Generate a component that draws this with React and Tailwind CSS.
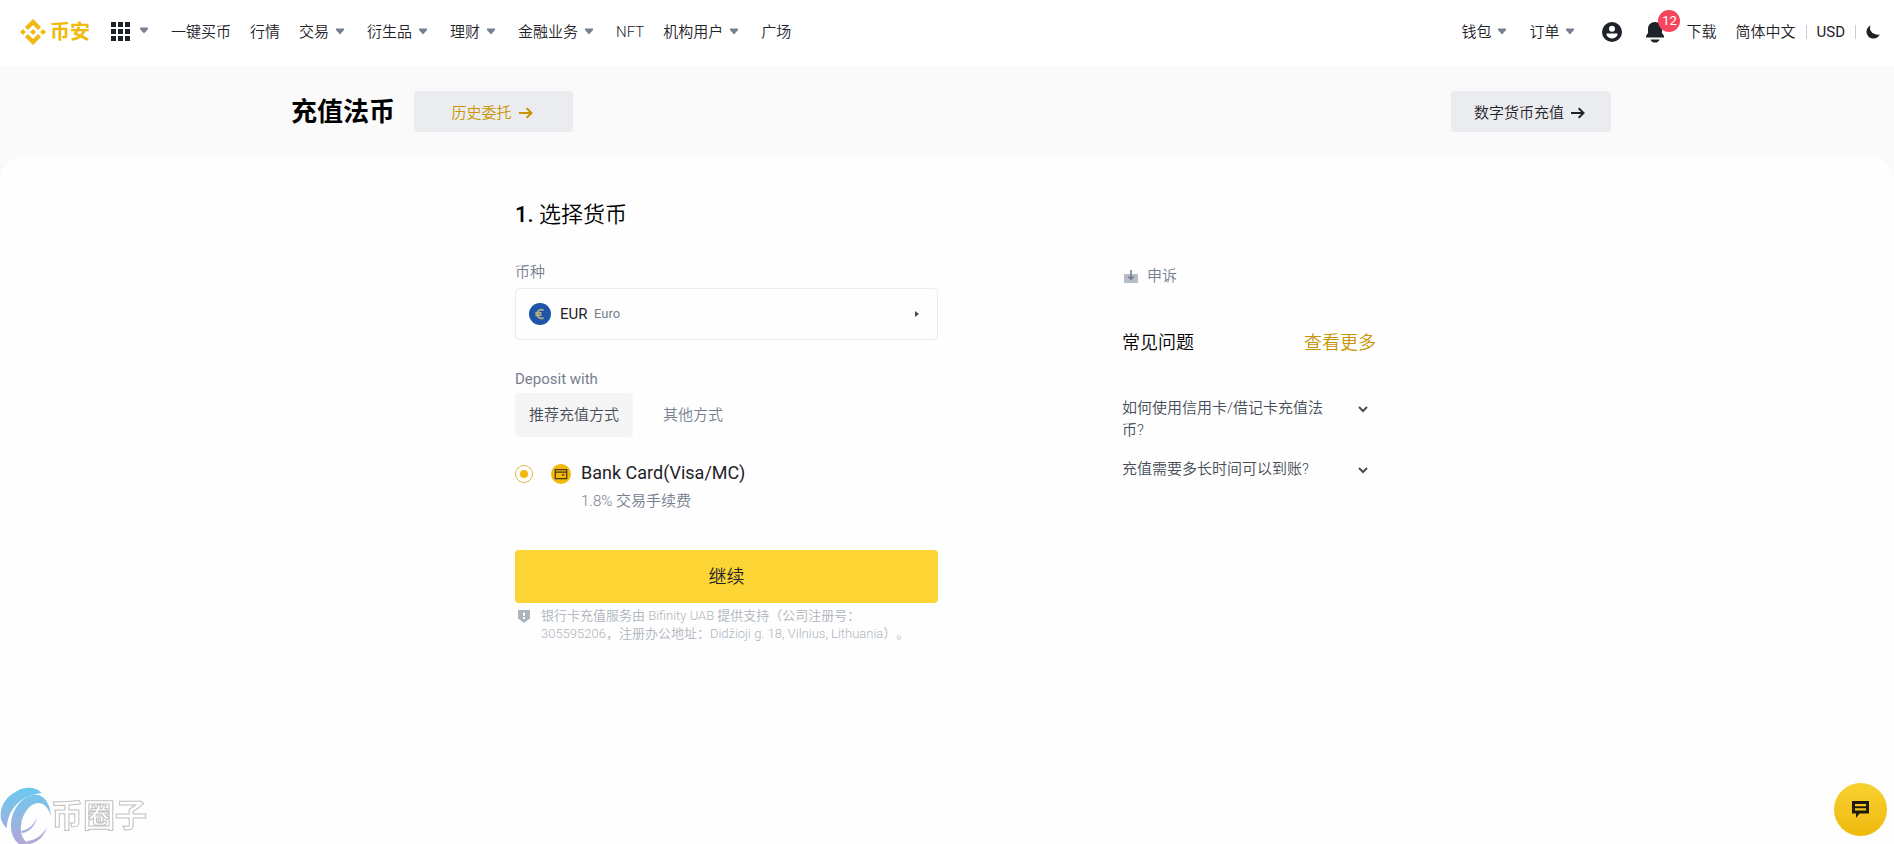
import { useState } from 'react';

const NAV_ITEMS = [
  { label: '一键买币' },
  { label: '行情' },
  { label: '交易', menu: true },
  { label: '衍生品', menu: true },
  { label: '理财', menu: true },
  { label: '金融业务', menu: true },
  { label: 'NFT' },
  { label: '机构用户', menu: true },
  { label: '广场' },
];

const FAQ = ['如何使用信用卡/借记卡充值法币?', '充值需要多长时间可以到账?'];

const Caret = ({ className = '' }) => (
  <svg viewBox="0 0 16 16" className={`h-4 w-4 shrink-0 fill-[#76808f] ${className}`} aria-hidden="true">
    <path d="M4 4.5h8v1.6L8 10.5 4 6.1z" />
  </svg>
);

const ArrowRight = () => (
  <svg viewBox="0 0 16 14" className="h-3.5 w-4 fill-none stroke-current stroke-2" aria-hidden="true">
    <path d="M1 7h12.5M8.7 2.2 13.5 7l-4.8 4.8" />
  </svg>
);

const BinanceMark = () => (
  <svg viewBox="0 0 126.61 126.61" className="h-[26px] w-[26px] fill-[#f0b90b]" aria-hidden="true">
    <path d="m38.73 53.2 24.59-24.58 24.6 24.6 14.3-14.31L63.32 0l-38.9 38.9z" />
    <path d="m0 63.31 14.3-14.31 14.31 14.31-14.31 14.3z" />
    <path d="m38.73 73.41 24.59 24.59 24.6-24.6 14.31 14.29-38.9 38.91-38.91-38.88z" />
    <path d="m98 63.31 14.3-14.31 14.31 14.3-14.31 14.32z" />
    <path d="m77.83 63.3-14.51-14.52-14.49 14.5 14.5 14.54z" />
  </svg>
);

const AppsIcon = () => (
  <svg viewBox="0 0 19 19" className="h-[19px] w-[19px] fill-[#1e2329]" aria-hidden="true">
    {[0, 7, 14].map((y) => [0, 7, 14].map((x) => <rect key={`${x}-${y}`} x={x} y={y} width="5" height="5" />))}
  </svg>
);

const UserIcon = () => (
  <svg viewBox="0 0 20 20" className="h-5 w-5" aria-hidden="true">
    <circle cx="10" cy="10" r="10" fill="#1e2329" />
    <circle cx="10" cy="6.800" r="3" fill="#fff" />
    <path d="M4.500 11.500h11v1.500c-1 2.300-3 3.500-5.500 3.500S5.500 15.300 4.500 13z" fill="#fff" />
  </svg>
);

const BellIcon = () => (
  <svg viewBox="0 0 18 21" className="h-[21px] w-[18px] fill-[#1e2329]" aria-hidden="true">
    <path d="M9 0c4.200 0 7 3 7 7v4l2 3v1.500H0V14l2-3V7c0-4 2.800-7 7-7zM4.500 17.500h9C12.800 19.700 11.200 20.600 9 20.600s-3.800-.9-4.500-3.100z" />
  </svg>
);

const MoonIcon = () => (
  <svg viewBox="0 0 14 14" className="h-3.5 w-3.5 fill-[#1e2329]" aria-hidden="true">
    <path d="M4.600.4A6.900 6.900 0 1 0 13.800 9.300 5.600 5.600 0 0 1 8.900 9.100 6.200 6.200 0 0 1 4.600.4z" />
  </svg>
);

const EuroIcon = () => (
  <svg viewBox="0 0 22 22" className="h-[22px] w-[22px]" aria-hidden="true">
    <circle cx="11" cy="11" r="11" fill="#1f55a8" />
    <path
      d="M14.600 7.300A4.300 4.300 0 0 0 8 11a4.300 4.300 0 0 0 6.600 3.700M6.300 9.900h6.200M6.300 12.100h6.200"
      fill="none"
      stroke="#b5b184"
      strokeWidth="1.700"
    />
  </svg>
);

const CardIcon = () => (
  <svg viewBox="0 0 20 20" className="h-5 w-5" aria-hidden="true">
    <circle cx="10" cy="10" r="10" fill="#f0b90b" />
    <path d="M4.300 5.600h11.400v9H4.300zM4.300 8.200h11.400M11 10.800h2.500" fill="none" stroke="#4a3a10" strokeWidth="1.300" />
  </svg>
);

const ShieldIcon = () => (
  <svg viewBox="0 0 12 13" className="h-[13px] w-3" aria-hidden="true">
    <path d="M0 0h12v8.500L6 13 0 8.500z" fill="#aeb4bc" />
    <path d="M5 2.500h2v3.300H5zM5 7h2v2H5z" fill="#fff" />
  </svg>
);

const AppealIcon = () => (
  <svg viewBox="0 0 14 13" className="h-[13px] w-3.5" aria-hidden="true">
    <path d="M0 4h14v9H0z" fill="#b7bdc6" />
    <path d="M6.200 0h1.600v6.500h3L7 10.500 3.200 6.500h3z" fill="#76808f" />
  </svg>
);

const ChevronDown = () => (
  <svg viewBox="0 0 10 7" className="h-[7px] w-2.5 fill-none stroke-[#474d57] stroke-2" aria-hidden="true">
    <path d="m1 1 4 4 4-4" />
  </svg>
);

const ChatIcon = () => (
  <svg viewBox="0 0 17 17" className="h-[17px] w-[17px]" aria-hidden="true">
    <path d="M0 0h17v12.500H7.500L4 17v-4.500H0z" fill="#1e1a0c" />
    <path d="M3 3h11v2.200H3zM3 7.300h11v2.200H3z" fill="#f3c41c" />
  </svg>
);

function Header() {
  return (
    <header className="flex h-[66px] items-center justify-between bg-white pl-5 pr-3.5 pb-0.5 text-[15px] text-[#1e2329]">
      <div className="flex items-center">
        <a href="#" className="flex items-center gap-1 text-xl font-bold text-[#f0b90b]">
          <BinanceMark />
          币安
        </a>
        <button type="button" className="ml-[21px] flex items-center gap-1.5 pb-0.5" aria-label="更多产品">
          <AppsIcon />
          <Caret />
        </button>
        <nav className="ml-[19px] flex items-center gap-[19px]">
          {NAV_ITEMS.map((item) => (
            <a key={item.label} href="#" className="flex items-center whitespace-nowrap">
              {item.label}
              {item.menu && <Caret className="ml-[3px]" />}
            </a>
          ))}
        </nav>
      </div>

      <div className="flex items-center whitespace-nowrap">
        <a href="#" className="flex items-center">
          钱包
          <Caret className="ml-[3px]" />
        </a>
        <a href="#" className="ml-[19px] flex items-center">
          订单
          <Caret className="ml-[3px]" />
        </a>
        <button type="button" className="ml-6" aria-label="账户">
          <UserIcon />
        </button>
        <button type="button" className="relative ml-6" aria-label="通知">
          <BellIcon />
          <span className="absolute -top-3 left-3 flex h-[22px] w-[22px] items-center justify-center rounded-full bg-[#f6465d] text-[13px] font-normal text-white">
            12
          </span>
        </button>
        <a href="#" className="ml-[22px]">下载</a>
        <a href="#" className="ml-[19px]">简体中文</a>
        <span className="mx-2.5 h-3.5 w-px bg-[#c9cdd3]" />
        <a href="#" className="font-normal">USD</a>
        <span className="mx-2.5 h-3.5 w-px bg-[#c9cdd3]" />
        <button type="button" aria-label="深色模式">
          <MoonIcon />
        </button>
      </div>
    </header>
  );
}

function DepositForm() {
  const [tab, setTab] = useState('recommended');

  const tabClass = (name) =>
    `h-11 rounded px-[14px] text-[15px] ${tab === name ? 'bg-[#f5f5f5] text-[#474d57]' : 'text-[#76808f]'}`;

  return (
    <form className="w-[423px]" onSubmit={(e) => e.preventDefault()}>
      <label htmlFor="currency" className="block text-[15px] leading-6 text-[#76808f]">
        币种
      </label>
      <div className="mt-1 flex h-[52px] items-center rounded border border-[#eaecef] pl-[13px] pr-[18px]">
        <EuroIcon />
        <select
          id="currency"
          className="ml-[9px] w-[34px] appearance-none text-[15px] font-normal text-[#1e2329] outline-none"
        >
          <option>EUR</option>
        </select>
        <span className="text-[13px] font-normal text-[#76808f]">Euro</span>
        <svg viewBox="0 0 4 6" className="ml-auto h-1.5 w-1 fill-[#474d57]" aria-hidden="true">
          <path d="M0 0v6l4-3z" />
        </svg>
      </div>

      <p className="mt-[27px] text-[15px] leading-6 font-normal text-[#76808f]">Deposit with</p>
      <div className="mt-0.5 flex gap-4">
        <button type="button" onClick={() => setTab('recommended')} className={tabClass('recommended')}>
          推荐充值方式
        </button>
        <button type="button" onClick={() => setTab('other')} className={tabClass('other')}>
          其他方式
        </button>
      </div>

      <label className="mt-6 flex items-start">
        <input
          type="radio"
          name="method"
          defaultChecked
          className="mt-1 grid h-[18px] w-[18px] appearance-none place-content-center rounded-full border border-[#e0b84a] before:h-2 before:w-2 before:rounded-full before:bg-[#f0b90b]"
        />
        <span className="ml-[18px] mt-[3px]">
          <CardIcon />
        </span>
        <span className="ml-2.5">
          <span className="block text-lg leading-6 font-normal text-[#1e2329]">Bank Card(Visa/MC)</span>
          <span className="mt-1 block text-[15px] leading-6 text-[#76808f]">1.8% 交易手续费</span>
        </span>
      </label>

      <button type="submit" className="mt-[37px] h-[53px] w-full rounded bg-[#fcd535] text-lg text-[#1e2329]">
        继续
      </button>
      <div className="mt-1 flex gap-[11px] pl-[3px] text-[13px] leading-[18px] text-[#aeb4bc] [text-spacing-trim:space-all]">
        <span className="mt-[3px] shrink-0">
          <ShieldIcon />
        </span>
        <p>银行卡充值服务由 Bifinity UAB 提供支持（公司注册号：305595206，注册办公地址：Didžioji g. 18, Vilnius, Lithuania）。</p>
      </div>
    </form>
  );
}

function HelpPanel() {
  return (
    <aside className="w-[257px] pr-[3px] text-[15px]">
      <a href="#" className="mt-1 flex items-center gap-[9px] pl-0.5 leading-6 text-[#76808f]">
        <AppealIcon />
        申诉
      </a>
      <div className="mt-[41px] flex justify-between text-lg leading-7">
        <h3 className="text-black">常见问题</h3>
        <a href="#" className="text-[#c99400]">查看更多</a>
      </div>
      <ul className="mt-10 space-y-[17px]">
        {FAQ.map((question) => (
          <li key={question}>
            <button type="button" className="flex w-full items-start justify-between pr-2 text-left leading-[22px] text-[#474d57]">
              <span className="w-[212px]">{question}</span>
              <span className="mt-[9px]">
                <ChevronDown />
              </span>
            </button>
          </li>
        ))}
      </ul>
    </aside>
  );
}

function Watermark() {
  return (
    <div className="pointer-events-none fixed bottom-0 left-0 flex items-end">
      <svg viewBox="0 0 51 58" className="h-[58px] w-[51px]" aria-hidden="true">
        <defs>
          <linearGradient id="swoosh" gradientUnits="userSpaceOnUse" x1="0" y1="4" x2="0" y2="58">
            <stop offset="0" stopColor="#6cc8ee" />
            <stop offset="1" stopColor="#b3a8d8" />
          </linearGradient>
        </defs>
        <g fill="url(#swoosh)">
          <path d="M42 7C36 1 26 0 17 5 5 11-1 22 1 33c1 4 3 7 6 9C7 25 20 9 42 7z" />
          <path d="M51 30C50 15 42 7 33 9 20 12 11 25 11 40c0 8 3 14 8 18h10c-6-4-9-10-8-18 1-12 8-22 17-23 6 0 10 4 13 13z" />
          <path d="M47 41c-5 9-13 14-21 14l3 3c8-1 15-7 18-17z" />
          <path d="M37 31c-3 8-9 13-16 14l1 2c8-1 13-7 15-16z" />
        </g>
      </svg>
      <span className="mb-2 text-[32px] leading-10 font-bold text-white [-webkit-text-stroke:1px_#c0c0c0]">币圈子</span>
    </div>
  );
}

export default function App() {
  return (
    <div className="min-h-screen bg-[#fefefe] font-['Roboto','Noto_Sans_CJK_SC',sans-serif] font-[350]">
      <Header />

      <div className="bg-[#fafafa]">
        <div className="pl-2">
          <div className="mx-auto flex max-w-[1320px] items-center pt-6 pb-[25px]">
            <h1 className="pt-0.5 text-[26px] leading-10 font-bold text-black">充值法币</h1>
            <button
              type="button"
              className="ml-[19px] flex h-[41px] w-[159px] items-center justify-center gap-1.5 rounded bg-[#eaecef] pt-1 pr-0.5 text-[15px] text-[#c99400]"
            >
              历史委托
              <ArrowRight />
            </button>
            <button
              type="button"
              className="ml-auto flex h-[41px] w-[160px] items-center justify-center gap-1.5 rounded bg-[#eaecef] pt-1 pr-0.5 text-[15px] text-[#1e2329]"
            >
              数字货币充值
              <ArrowRight />
            </button>
          </div>
        </div>

        <main className="rounded-t-3xl bg-[#fefefe] pt-[42px] pb-24">
          <div className="mx-auto max-w-[864px]">
            <h2 className="text-[22px] leading-8 text-black">
              <span className="font-medium">1.</span> 选择货币
            </h2>
            <div className="mt-[29px] flex justify-between">
              <DepositForm />
              <HelpPanel />
            </div>
          </div>
        </main>
      </div>

      <Watermark />
      <button
        type="button"
        aria-label="在线客服"
        className="fixed right-[7px] bottom-2 flex h-[53px] w-[53px] items-center justify-center rounded-full bg-linear-to-b from-[#f8d12f] to-[#f0b90b]"
      >
        <ChatIcon />
      </button>
    </div>
  );
}
